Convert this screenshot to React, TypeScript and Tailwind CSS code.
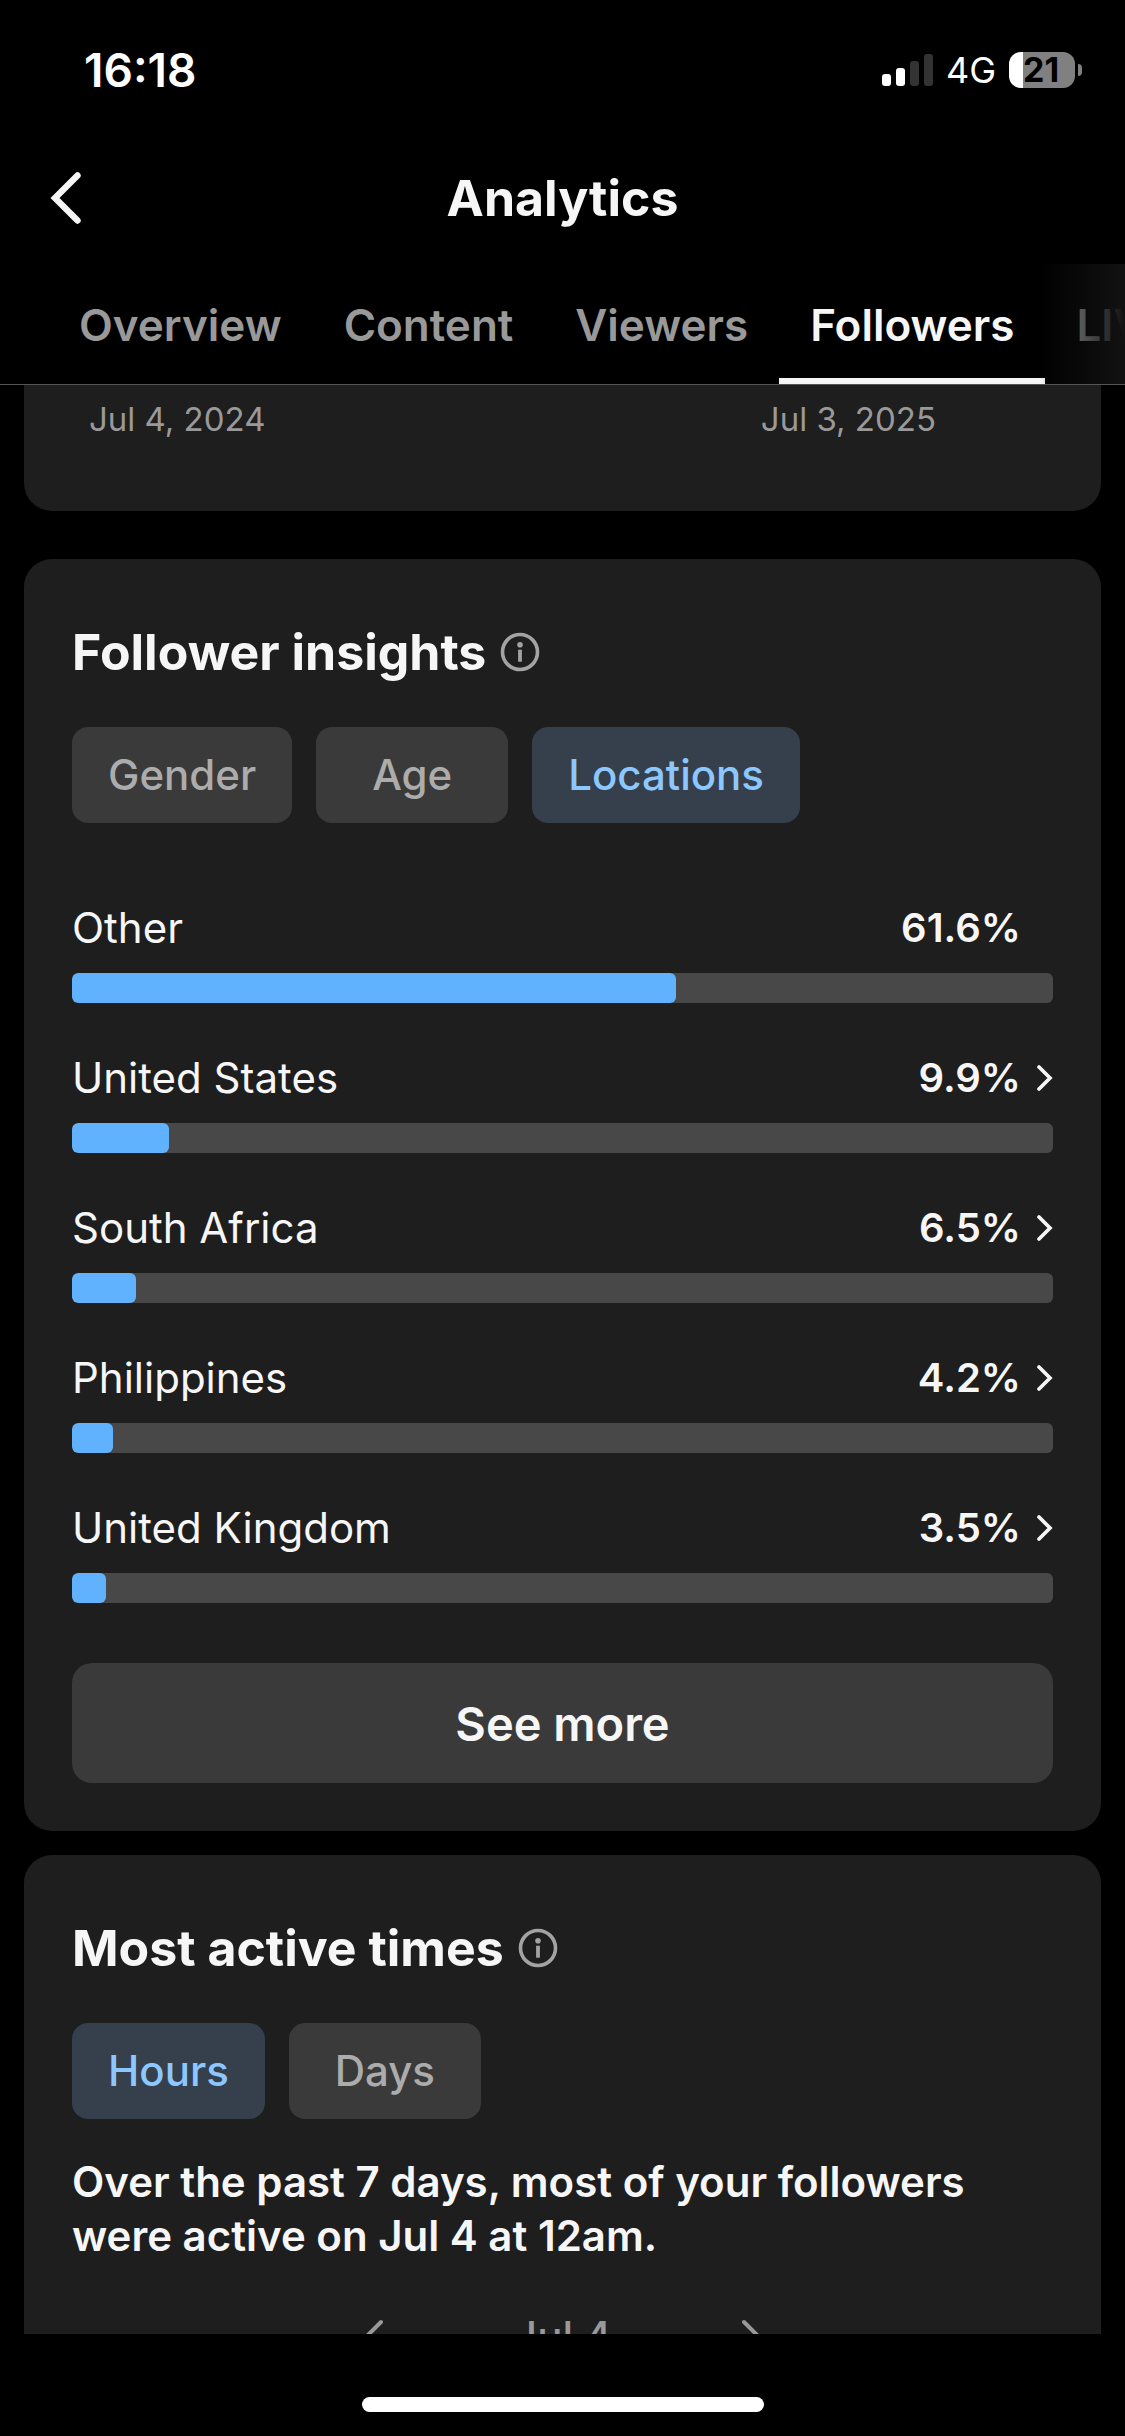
import React, { useState } from "react";

interface LocationStat {
  name: string;
  percent: number;
  hasDetails: boolean;
}

const tabs = ["Overview", "Content", "Viewers", "Followers", "LIVE"];

const locations: LocationStat[] = [
  { name: "Other", percent: 61.6, hasDetails: false },
  { name: "United States", percent: 9.9, hasDetails: true },
  { name: "South Africa", percent: 6.5, hasDetails: true },
  { name: "Philippines", percent: 4.2, hasDetails: true },
  { name: "United Kingdom", percent: 3.5, hasDetails: true },
];

const InfoIcon = () => (
  <svg className="h-10 w-10" viewBox="0 0 40 40" fill="none">
    <circle cx="20" cy="20" r="17.5" stroke="currentColor" strokeWidth="3.6" />
    <circle cx="20" cy="12.7" r="2.8" fill="currentColor" />
    <path d="M20 17.7v12" stroke="currentColor" strokeWidth="3.8" />
  </svg>
);

const ChevronRight = () => (
  <svg className="h-7 w-4" viewBox="0 0 16 28" fill="none">
    <path d="M2 3l11 11L2 25" stroke="currentColor" strokeWidth="3.7" strokeLinecap="round" />
  </svg>
);

const StatusBar = () => (
  <div className="flex h-[132px] items-center justify-between pt-[7px] pr-[43px] pl-[84px]">
    <span className="text-[46px] leading-none font-semibold text-white">16:18</span>
    <div className="flex items-center gap-[13px]">
      <svg className="h-8 w-[51px]" viewBox="0 0 51 32">
        <rect x="0" y="20" width="9" height="12" rx="3" fill="#fff" />
        <rect x="14" y="14" width="9" height="18" rx="3" fill="#fff" />
        <rect x="28" y="7" width="9" height="25" rx="3" fill="#333" />
        <rect x="42" y="0" width="9" height="32" rx="3" fill="#333" />
      </svg>
      <span className="text-[36px] leading-10 text-white">4G</span>
      <div className="flex items-center gap-[3px]">
        <div className="flex h-9 w-[66px] items-center rounded-xl bg-gradient-to-r from-white from-[21%] to-[#808080] to-[21%] pl-[14px]">
          <span className="text-[34px] leading-9 font-bold text-black">21</span>
        </div>
        <div className="h-3 w-1 rounded-r-full bg-[#808080]"></div>
      </div>
    </div>
  </div>
);

interface PillsProps {
  options: string[];
  selected: string;
  onSelect: (value: string) => void;
}

const Pills = ({ options, selected, onSelect }: PillsProps) => (
  <div className="flex gap-6">
    {options.map((option) => (
      <button
        key={option}
        onClick={() => onSelect(option)}
        className={`h-24 min-w-48 rounded-2xl px-9 text-[42px] leading-none font-medium ${
          option === selected ? "bg-[#35404c] text-[#8dc7ff]" : "bg-[#3a3a3a] text-[#acacac]"
        }`}
      >
        {option}
      </button>
    ))}
  </div>
);

const SectionTitle = ({ title }: { title: string }) => (
  <div className="flex items-center gap-[14px]">
    <h2 className="text-[50px] leading-[60px] font-bold">{title}</h2>
    <button aria-label={`About ${title}`} className="text-[#a3a3a3]">
      <InfoIcon />
    </button>
  </div>
);

const LocationRow = ({ location }: { location: LocationStat }) => (
  <li>
    <div className="flex h-[60px] items-center justify-between">
      <span className="text-[42px] leading-none">{location.name}</span>
      <div className="flex items-center">
        <span className="text-[40px] leading-none font-semibold">{location.percent}%</span>
        <div className="flex w-8 justify-end">
          {location.hasDetails && (
            <button aria-label={`Show ${location.name}`}>
              <ChevronRight />
            </button>
          )}
        </div>
      </div>
    </div>
    <div className="mt-[15px] h-[30px] overflow-hidden rounded-md bg-[#484848]">
      <div className="h-full rounded-md bg-[#60b2ff]" style={{ width: `${location.percent}%` }}></div>
    </div>
  </li>
);

const App = () => {
  const [activeTab, setActiveTab] = useState("Followers");
  const [insight, setInsight] = useState("Locations");
  const [period, setPeriod] = useState("Hours");

  return (
    <div className="flex h-screen flex-col overflow-hidden bg-black font-['Inter',sans-serif] text-[#f6f6f6]">
      <StatusBar />

      {/* Header */}
      <header className="grid h-[132px] shrink-0 grid-cols-[1fr_auto_1fr] items-center px-12">
        <button aria-label="Back" className="justify-self-start">
          <svg className="h-[54px] w-9" viewBox="0 0 36 54" fill="none">
            <path d="M29.5 4.5L7 27l22.5 22.5" stroke="currentColor" strokeWidth="6.4" strokeLinecap="round" />
          </svg>
        </button>
        <h1 className="text-[50px] leading-none font-bold">Analytics</h1>
      </header>

      {/* Tabs */}
      <nav className="relative flex h-[121px] shrink-0 overflow-hidden border-b border-[#555] pl-12">
        {tabs.map((tab) => (
          <button
            key={tab}
            onClick={() => setActiveTab(tab)}
            className={`shrink-0 border-b-[6px] px-[31px] pt-2 text-[44px] leading-none font-semibold ${
              activeTab === tab ? "border-[#f6f6f6]" : "border-transparent text-[#999]"
            }`}
          >
            {tab}
          </button>
        ))}
        <div className="pointer-events-none absolute inset-y-0 right-0 w-[85px] bg-gradient-to-r from-transparent to-[#121212]"></div>
      </nav>

      {/* Scroll area */}
      <main className="min-h-0 flex-1 overflow-hidden px-6">
        <section className="flex h-[126px] justify-between rounded-b-[28px] bg-[#1e1e1e] pt-[14px] pr-[165px] pl-[65px] text-[33px] leading-10 text-[#999]">
          <span>Jul 4, 2024</span>
          <span>Jul 3, 2025</span>
        </section>

        <section className="mt-12 rounded-[28px] bg-[#1e1e1e] px-12 pt-[63px] pb-12">
          <SectionTitle title="Follower insights" />
          <div className="mt-[45px]">
            <Pills options={["Gender", "Age", "Locations"]} selected={insight} onSelect={setInsight} />
          </div>
          <ul className="mt-[75px] flex flex-col gap-[45px]">
            {locations.map((location) => (
              <LocationRow key={location.name} location={location} />
            ))}
          </ul>
          <button className="mt-[60px] h-[120px] w-full rounded-[20px] bg-[#3a3a3a] text-[47px] leading-none font-semibold">
            See more
          </button>
        </section>

        <section className="mt-6 rounded-[28px] bg-[#1e1e1e] px-12 pt-[63px] pb-12">
          <SectionTitle title="Most active times" />
          <div className="mt-[45px]">
            <Pills options={["Hours", "Days"]} selected={period} onSelect={setPeriod} />
          </div>
          <p className="mt-9 text-[42px] leading-[54px] font-semibold">
            Over the past 7 days, most of your followers were active on Jul 4 at 12am.
          </p>
          <div className="mt-11 flex items-center justify-center gap-[130px] text-[#999]">
            <button aria-label="Previous day">
              <svg className="h-9 w-5" viewBox="0 0 20 36" fill="none">
                <path d="M18 3L3 18l15 15" stroke="currentColor" strokeWidth="4" strokeLinecap="round" />
              </svg>
            </button>
            <span className="text-[42px] leading-[60px] font-medium">Jul 4</span>
            <button aria-label="Next day">
              <svg className="h-9 w-5" viewBox="0 0 20 36" fill="none">
                <path d="M2 3l15 15L2 33" stroke="currentColor" strokeWidth="4" strokeLinecap="round" />
              </svg>
            </button>
          </div>
        </section>
      </main>

      {/* Home indicator */}
      <footer className="flex h-[102px] shrink-0 items-end justify-center pb-6">
        <div className="h-[15px] w-[402px] rounded-full bg-white"></div>
      </footer>
    </div>
  );
};

export default App;
